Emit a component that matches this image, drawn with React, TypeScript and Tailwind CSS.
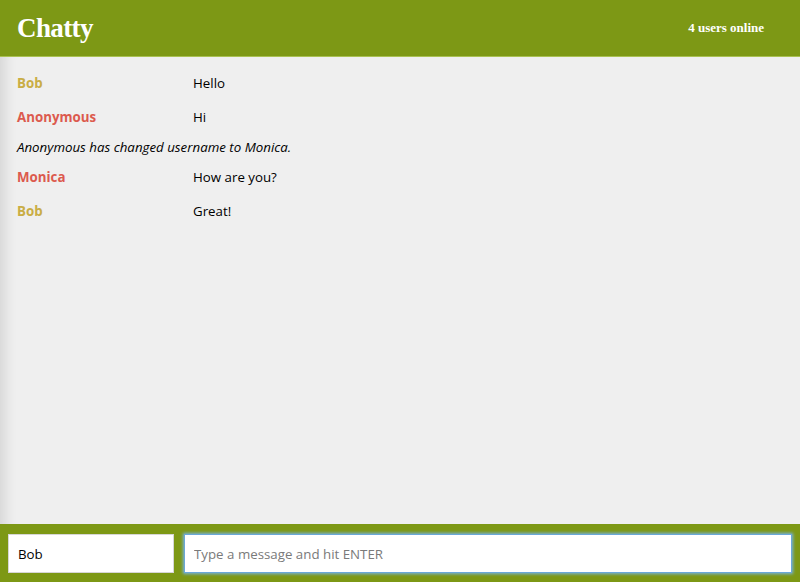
type Message = {
  id: number;
  type: "message" | "notification";
  username?: string;
  content: string;
  color?: string;
};

const MESSAGES: Message[] = [
  { id: 1, type: "message", username: "Bob", content: "Hello", color: "text-[#c9ad45]" },
  { id: 2, type: "message", username: "Anonymous", content: "Hi", color: "text-[#dc5a4e]" },
  { id: 3, type: "notification", content: "Anonymous has changed username to Monica." },
  { id: 4, type: "message", username: "Monica", content: "How are you?", color: "text-[#dc5a4e]" },
  { id: 5, type: "message", username: "Bob", content: "Great!", color: "text-[#c9ad45]" },
];

function NavBar() {
  return (
    <nav className="flex h-[57px] shrink-0 items-center justify-between border-b border-[#a9c152] bg-[#7d9815] pl-[17px] pr-9 font-['Liberation_Serif',serif] text-white">
      <a className="text-[27px] font-bold leading-none tracking-[-0.6px]">Chatty</a>
      <span className="text-[13px] font-bold">4 users online</span>
    </nav>
  );
}

function MessageList() {
  return (
    <main className="flex-1 overflow-hidden bg-[#efefef] px-[17px] pt-[10px] shadow-[inset_16px_0_14px_-12px_rgba(0,0,0,0.12)]">
      {MESSAGES.map((m) =>
        m.type === "message" ? (
          <div key={m.id} className="flex h-[34px] items-center text-[13.3px]">
            <span className={`w-[176px] font-bold ${m.color}`}>{m.username}</span>
            <span className="text-black">{m.content}</span>
          </div>
        ) : (
          <div key={m.id} className="flex h-[26px] items-center text-[13.3px] italic text-black">
            {m.content}
          </div>
        ),
      )}
    </main>
  );
}

function ChatBar() {
  return (
    <footer className="flex h-[58px] shrink-0 items-center gap-[10px] bg-[#7d9815] px-2 pt-px">
      <input
        className="h-[39px] w-[166px] border border-[#d6d6d6] bg-white px-[9px] text-[13.3px] text-black outline-none"
        defaultValue="Bob"
      />
      <input
        className="h-[39px] flex-1 border border-[#6aa8d8] bg-white px-[9px] text-[13.3px] text-black shadow-[0_0_3px_1px_#78b4e4] outline-none placeholder:text-[#7a7a7a]"
        placeholder="Type a message and hit ENTER"
      />
    </footer>
  );
}

export default function App() {
  return (
    <div className="flex h-[582px] w-[800px] flex-col font-['Open_Sans',sans-serif]">
      <NavBar />
      <MessageList />
      <ChatBar />
    </div>
  );
}
